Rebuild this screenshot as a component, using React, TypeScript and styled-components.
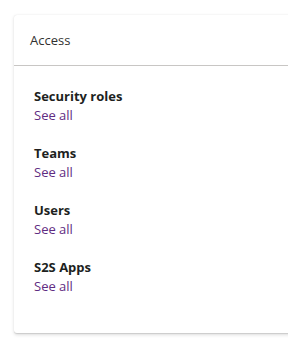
import React from "react";
import styled, { createGlobalStyle } from "styled-components";

const Global = createGlobalStyle`
  html, body { margin: 0; padding: 0; background: #ffffff; }
  body { font-family: "Open Sans", "Noto Sans", Arial, sans-serif; }
`;

const Page = styled.div`
  width: 288px;
  height: 345px;
  overflow: hidden;
  padding: 15px 0 0 14px;
  box-sizing: border-box;
`;

const Card = styled.section`
  width: 300px;
  height: 318px;
  background: #fff;
  border-radius: 3px;
  box-shadow: 0 1.6px 3.6px rgba(0,0,0,0.13), 0 0.3px 0.9px rgba(0,0,0,0.11);
  display: flex;
  flex-direction: column;
`;

const Header = styled.header`
  height: 51px;
  box-sizing: border-box;
  display: flex;
  align-items: center;
  padding: 0 16px;
  border-bottom: 1px solid #c8c6c4;
  font-size: 13px;
  color: #323130;
`;

const Body = styled.div`
  display: flex;
  flex-direction: column;
  gap: 19px;
  padding: 21px 20px;
`;

const Group = styled.div`
  display: flex;
  flex-direction: column;
`;

const Title = styled.div`
  font-size: 13px;
  font-weight: 700;
  line-height: 19px;
  color: #201f1e;
`;

const Link = styled.a`
  font-size: 13px;
  line-height: 19px;
  color: #5f2c82;
  text-decoration: none;
`;

const items = ["Security roles", "Teams", "Users", "S2S Apps"];

export default function App() {
  return (
    <>
      <Global />
      <Page>
        <Card>
          <Header>Access</Header>
          <Body>
            {items.map((t) => (
              <Group key={t}>
                <Title>{t}</Title>
                <Link href="#">See all</Link>
              </Group>
            ))}
          </Body>
        </Card>
      </Page>
    </>
  );
}
